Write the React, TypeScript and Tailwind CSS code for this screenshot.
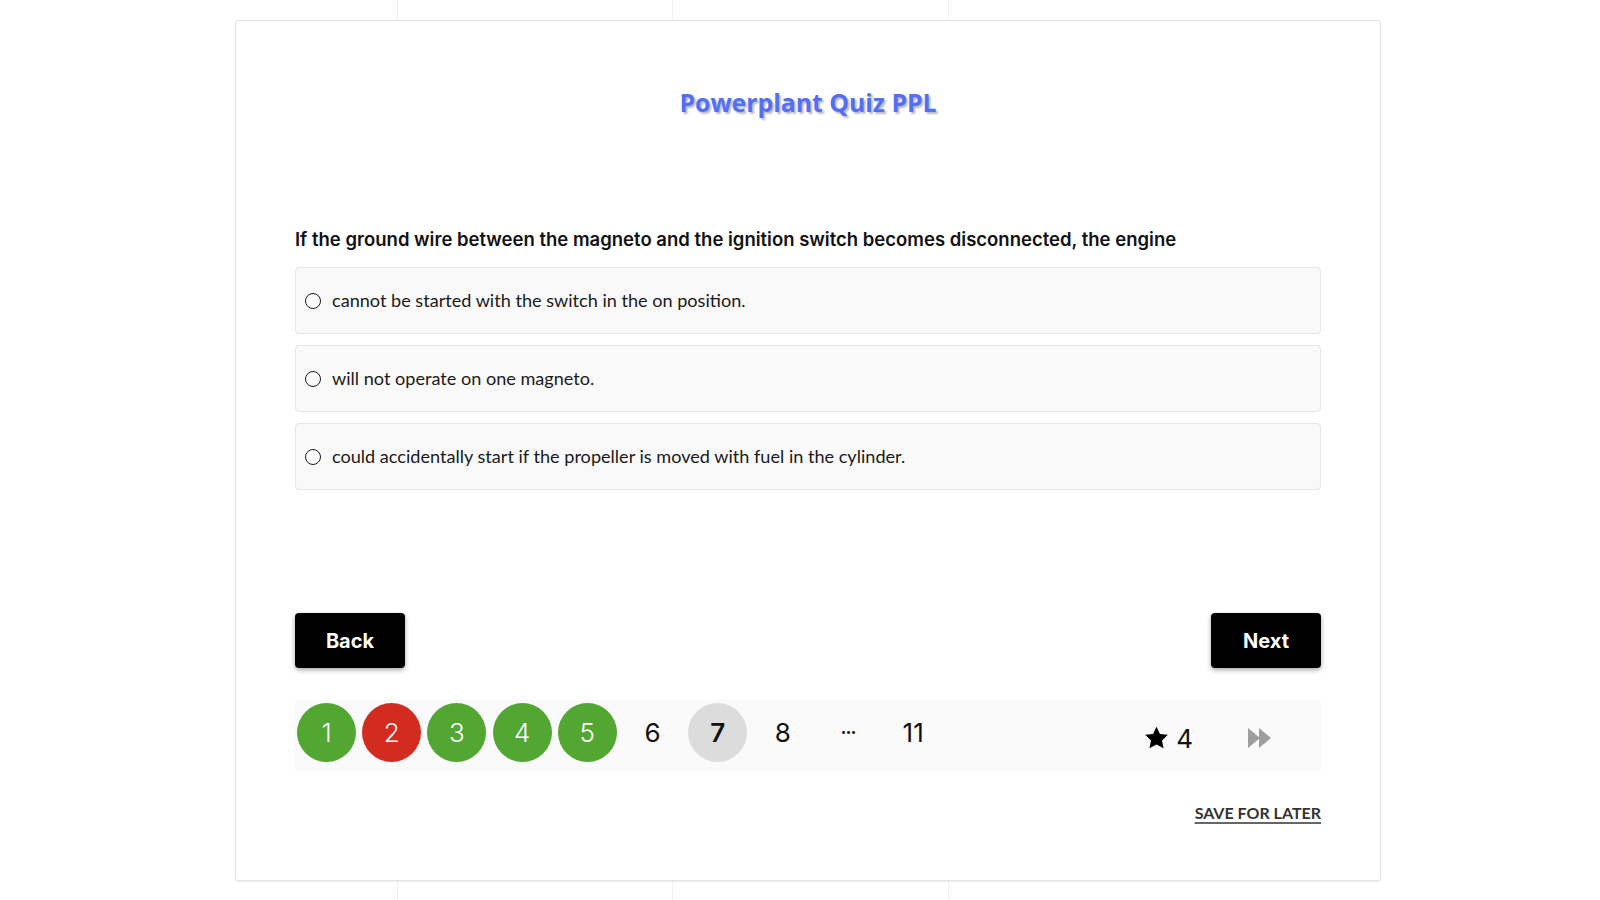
import React from "react";

const items: { label: string; kind: "green" | "red" | "plain" | "current" | "dots" }[] = [
  { label: "1", kind: "green" },
  { label: "2", kind: "red" },
  { label: "3", kind: "green" },
  { label: "4", kind: "green" },
  { label: "5", kind: "green" },
  { label: "6", kind: "plain" },
  { label: "7", kind: "current" },
  { label: "8", kind: "plain" },
  { label: "···", kind: "dots" },
  { label: "11", kind: "plain" },
];

const options = [
  "cannot be started with the switch in the on position.",
  "will not operate on one magneto.",
  "could accidentally start if the propeller is moved with fuel in the cylinder.",
];

function PageItem({ label, kind }: { label: string; kind: string }) {
  const base =
    "w-[59px] h-[59px] rounded-full flex items-center justify-center text-[26px] font-['Inter',sans-serif]";
  if (kind === "green")
    return <div className={`${base} bg-[#52a733] text-white font-light`}>{label}</div>;
  if (kind === "red")
    return <div className={`${base} bg-[#d12c1f] text-white font-light`}>{label}</div>;
  if (kind === "current")
    return <div className={`${base} bg-[#dcdcdc] text-[#111] font-semibold`}>{label}</div>;
  if (kind === "dots")
    return (
      <div className="w-[59px] h-[59px] flex items-center justify-center text-[18px] tracking-[-1px] text-[#222] font-['Inter',sans-serif] font-bold">
        {label}
      </div>
    );
  return <div className={`${base} text-[#111]`}>{label}</div>;
}

export default function App() {
  return (
    <div className="relative w-[1600px] h-[900px] bg-white overflow-hidden">
      <div className="absolute inset-0 flex pointer-events-none">
        <div className="w-[398px] h-full border-r border-[#f0f0f0]" />
        <div className="w-[275px] h-full border-r border-[#f0f0f0]" />
        <div className="w-[276px] h-full border-r border-[#f0f0f0]" />
      </div>
      <div className="relative pt-[20px] pl-[235px]">
        <div className="w-[1146px] h-[861px] bg-white border border-[#e4e4e4] rounded-[3px] shadow-[0_1px_2px_rgba(0,0,0,0.08)] px-[59px] pt-[65px]">
          <h1 className="text-center text-[24.8px] leading-[32px] font-bold text-[#5270f5] font-['Open_Sans',sans-serif] [text-shadow:2px_2px_2px_rgba(0,0,0,0.28)]">
            Powerplant Quiz PPL
          </h1>
          <div className="mt-[108px] text-[18.5px] leading-[26px] font-semibold text-[#111] font-['Inter',sans-serif]">
            If the ground wire between the magneto and the ignition switch becomes disconnected, the engine
          </div>
          <div className="mt-[15px] flex flex-col gap-[11px]">
            {options.map((o) => (
              <div
                key={o}
                className="h-[67px] bg-[#f9f9f9] border border-[#e6e6e6] rounded-[4px] flex items-center pl-[9px]"
              >
                <span className="w-[16px] h-[16px] rounded-full border-[1.6px] border-[#1a1a1a] bg-white shrink-0" />
                <span className="ml-[11px] text-[18.1px] text-[#1a1a1a] font-['Lato',sans-serif]">{o}</span>
              </div>
            ))}
          </div>
          <div className="mt-[123px] flex justify-between">
            <button className="w-[110px] h-[55px] bg-black text-white rounded-[4px] text-[20px] font-bold font-['Inter',sans-serif] shadow-[0_2px_5px_rgba(0,0,0,0.35)]">
              Back
            </button>
            <button className="w-[110px] h-[55px] bg-black text-white rounded-[4px] text-[20px] font-bold font-['Inter',sans-serif] shadow-[0_2px_5px_rgba(0,0,0,0.35)]">
              Next
            </button>
          </div>
          <div className="mt-[32px] h-[71px] bg-[#fafafa] flex items-start pl-[2px] pt-[3px]">
            <div className="flex gap-[6.2px]">
              {items.map((it) => (
                <PageItem key={it.label} label={it.label} kind={it.kind} />
              ))}
            </div>
            <div className="ml-auto mr-[49px] h-[65px] flex items-center">
              <svg width="27" height="26" viewBox="0 0 24 24" className="mt-[4px]">
                <path
                  d="M12 1.5l3.2 6.7 7.3.9-5.4 5.1 1.4 7.3L12 18l-6.5 3.5 1.4-7.3-5.4-5.1 7.3-.9z"
                  fill="#000"
                />
              </svg>
              <span className="ml-[6px] text-[26px] text-[#111] font-['Inter',sans-serif] mt-[6px]">4</span>
              <svg width="24" height="20" viewBox="0 0 24 20" className="ml-[55px] mt-[4px]">
                <path d="M0 0 L12 10 L0 20 Z" fill="#9e9e9e" />
                <path d="M11 0 L23 10 L11 20 Z" fill="#9e9e9e" />
              </svg>
            </div>
          </div>
          <div className="mt-[32px] flex justify-end">
            <span className="text-[16px] leading-[20px] font-bold text-[#333] underline decoration-[#666] decoration-2 underline-offset-[3px] font-['Lato',sans-serif]">
              SAVE FOR LATER
            </span>
          </div>
        </div>
      </div>
    </div>
  );
}
